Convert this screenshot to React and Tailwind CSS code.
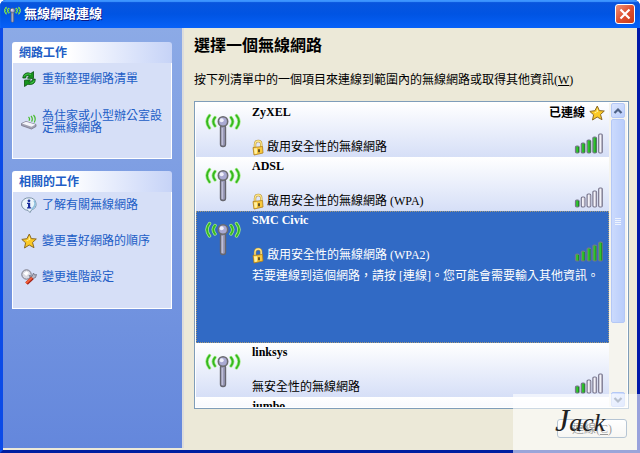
import React from "react";

const networks = [
  { name: "ZyXEL", security: "啟用安全性的無線網路", locked: true, bars: 4, connected: true },
  { name: "ADSL", security: "啟用安全性的無線網路 (WPA)", locked: true, bars: 1 },
  {
    name: "SMC Civic",
    security: "啟用安全性的無線網路 (WPA2)",
    locked: true,
    bars: 5,
    selected: true,
    hint: "若要連線到這個網路，請按 [連線]。您可能會需要輸入其他資訊。",
  },
  { name: "linksys", security: "無安全性的無線網路", bars: 2 },
  { name: "jumbo" },
];

function Antenna({ className }) {
  return (
    <svg viewBox="0 0 36 36" className={className} aria-hidden="true">
      <g fill="none" strokeLinecap="round">
        <g stroke="#a6ec8c" strokeWidth="3.4">
          <path d="M4.5 3.5Q-.5 9.5 4.5 16M10 5.500Q6.500 9.500 10 14M31.500 3.500Q36.500 9.500 31.500 16M26 5.500Q29.500 9.500 26 14" />
        </g>
        <g stroke="#35b81f" strokeWidth="1.900">
          <path d="M4.500 3.500Q-.5 9.500 4.500 16M10 5.500Q6.500 9.500 10 14M31.500 3.500Q36.500 9.500 31.500 16M26 5.500Q29.500 9.500 26 14" />
        </g>
      </g>
      <rect x="15.500" y="13" width="5" height="21.500" rx="2.200" fill="#9a9ab8" stroke="#66666e" strokeWidth="1.400" />
      <path d="M17.200 16v17" stroke="#d0d0e4" strokeWidth="1" />
      <circle cx="18" cy="9.500" r="4.700" fill="#a9a9d2" stroke="#6c6c70" strokeWidth="1.600" />
      <circle cx="16.700" cy="8.200" r="2" fill="#efeffa" />
    </svg>
  );
}

function Star({ className }) {
  return (
    <svg viewBox="0 0 16 16" className={className} aria-hidden="true">
      <path d="M8.300 1 10.300 5.600 15.300 6 11.500 9.500 13 14.700 8.200 12 3.500 15 4.600 9.800.8 6.400 5.900 5.700Z" fill="#fbc926" stroke="#8b6a24" strokeWidth="1" strokeLinejoin="round" />
      <path d="M8.200 3 9.300 6.700 5 7.100 7 8.300 6 11Q7.500 8 8.200 3Z" fill="#fff29a" />
    </svg>
  );
}

function Lock({ className }) {
  return (
    <svg viewBox="0 0 12 17" className={className} aria-hidden="true">
      <path d="M3 9V5.500Q3 2 6.200 2T9.200 5.500V8" fill="none" stroke="#b5913a" strokeWidth="2.400" />
      <path d="M3 9V5.500Q3 2 6.200 2T9.200 5.500V8" fill="none" stroke="#ffe98a" strokeWidth="1.300" />
      <path d="M1 8.500 10.500 7.500 11 14 2 16Z" fill="#f9c83c" stroke="#b07d16" strokeWidth=".8" strokeLinejoin="round" />
      <path d="M2 9.500 5 9.200 5 14.500 2.700 15Z" fill="#fff0a0" />
      <path d="M7 10.300v3" stroke="#44361a" strokeWidth="1.600" />
    </svg>
  );
}

function Signal({ level }) {
  const heights = [7, 10, 13, 16, 19];
  return (
    <svg viewBox="0 0 30 22" className="h-[22px] w-[30px]" role="img" aria-label={`訊號強度 ${level}`}>
      {heights.map((h, i) => (
        <g key={h}>
          <rect x={1.5 + i * 5.8} y={21 - h} width="3.600" height={h} rx="1.200" fill={i < level ? "#2fc42c" : "#f3f2f8"} stroke="#77748c" strokeWidth="1.200" />
          <path d={`M${4.5 + i * 5.800} ${22 - h}V20.500`} stroke={i < level ? "#13851b" : "#a9a6b6"} strokeWidth=".8" />
        </g>
      ))}
    </svg>
  );
}

function RefreshIcon() {
  return (
    <svg viewBox="0 0 16 16" className="size-4" aria-hidden="true">
      <g fill="#17941f" stroke="#07500d" strokeWidth=".8" strokeLinejoin="round">
        <path d="M1.800 7Q2.200 2 7 1.800L9.800 2.500 12.500.6V7.500L6.500 7.200 8.300 5Q5.200 3.600 4.600 7Z" />
        <path d="M14.200 8Q14.500 13 9.500 13.500L6.800 13.300 3.500 15.500V9.200L9.500 8.800 7.800 10.900Q10.800 11.600 11.400 8.600Z" />
      </g>
      <path d="M3 5.500Q4 2.800 7.500 2.900L10 3.500M13.200 9.500Q12.800 12 9.500 12.300" fill="none" stroke="#4fd04f" strokeWidth=".9" />
    </svg>
  );
}

function RouterIcon() {
  return (
    <svg viewBox="0 0 16 16" className="size-4" aria-hidden="true">
      <path d="M.5 9.500 5 7.500 15 10.500V12.500L10.500 15 .5 11.500Z" fill="#a2a2b4" stroke="#77778a" strokeWidth=".8" />
      <path d="M1 9.500 5 7.800 14.500 10.600 10.500 12.800Z" fill="#f4f4fa" />
      <path d="M7.500 3Q9.300 4.500 8 6.800M10 2Q12.300 4.500 10.600 7.600M12.500 1Q15.500 4.500 13.200 8.500" fill="none" stroke="#45bb2c" strokeWidth="1.200" />
    </svg>
  );
}

function InfoIcon() {
  return (
    <svg viewBox="0 0 16 16" className="size-4" aria-hidden="true">
      <path d="M8 .8A7 6.300 0 0 1 10.500 13L9 15.600 7 13.400A7 6.300 0 0 1 8 .8Z" fill="#eaf4fb" stroke="#7d93a8" />
      <path d="M13 3.500Q16 8.500 10.500 12.500" fill="none" stroke="#8fc0de" strokeWidth="1.500" />
      <circle cx="8" cy="3.800" r="1.400" fill="#1c2f9c" />
      <path d="M6 5.800H9.200V10.200H10.200V11.400H6V10.200H7V7H6Z" fill="#1c2f9c" />
    </svg>
  );
}

function ToolsIcon() {
  return (
    <svg viewBox="0 0 16 16" className="size-4" aria-hidden="true">
      <circle cx="5.500" cy="5.500" r="4.700" fill="#d9d9e2" stroke="#777785" />
      <path d="M2.500 4.500 5.500 2.200 8 4 5.200 7Z" fill="#fff" />
      <path d="M8 6.500 11 7.500 12.500 4 13.500 6 15.500 5.500 14.500 8.500 11 10Z" fill="#b9b9c6" stroke="#6c6c7c" strokeWidth=".8" />
      <path d="M11.500 9 5.500 14.500" stroke="#a32016" strokeWidth="3.600" />
      <path d="M11 8.800 5 14.200" stroke="#f2613c" strokeWidth="1.900" />
    </svg>
  );
}

function Panel({ title, height, children }) {
  return (
    <section>
      <h2 className="flex h-[21px] items-center rounded-t-[3px] bg-linear-to-r from-white from-35% to-[#c6d3f7] pl-[7px] text-[12px] font-bold leading-4 text-[#215dc6]">
        {title}
      </h2>
      <div className={`border border-t-0 border-white bg-[#d6dff7] px-2 ${height}`}>{children}</div>
    </section>
  );
}

function Task({ icon, children }) {
  return (
    <li>
      <a href="#" className="flex items-center gap-[5px] text-[12px] leading-3 text-[#215dc6]">
        <span className="size-4 shrink-0">{icon}</span>
        <span>{children}</span>
      </a>
    </li>
  );
}

function NetworkRow({ network }) {
  const { name, security, locked, bars, connected, selected, hint } = network;
  return (
    <li
      className={
        selected
          ? "flex h-[132px] shrink-0 border border-dotted border-[#a59a78] bg-[#316ac5] text-white"
          : "flex h-[54px] shrink-0 border border-transparent bg-linear-to-b from-white to-[#d6dff7] bg-origin-border text-black"
      }
    >
      <Antenna className="ml-2 mt-2 size-9 shrink-0" />
      <div className="ml-[11px] min-w-0 flex-1 whitespace-nowrap text-[12px] leading-4">
        <div className="flex h-[34px] items-start justify-between">
          <h3 className="font-bold">{name}</h3>
          {connected && (
            <span className="flex items-center gap-1 pr-[3px] pt-px font-bold">
              已連線
              <Star className="size-4" />
            </span>
          )}
        </div>
        {security && (
          <div className="flex h-[18px] items-center">
            {locked && <Lock className="mr-[3px] h-[17px] w-3" />}
            <span className="flex-1">{security}</span>
            <span className="-mt-2 pr-1">
              <Signal level={bars} />
            </span>
          </div>
        )}
        {hint && <p className="pt-1">{hint}</p>}
      </div>
    </li>
  );
}

function ScrollButton({ label, path }) {
  return (
    <button aria-label={label} className="flex h-[15px] w-full shrink-0 items-center justify-center rounded-[2px] border border-[#b4c8f6] bg-linear-to-br from-[#dce6fe] to-[#b9cdfb]">
      <svg viewBox="0 0 10 8" className="h-2 w-[10px]" aria-hidden="true">
        <path d={path} fill="none" stroke="#4d6185" strokeWidth="2.200" />
      </svg>
    </button>
  );
}

export default function App() {
  return (
    <div className={`relative flex h-screen flex-col overflow-hidden rounded-t-[6px] bg-[#0a3fd8] font-["Liberation_Serif","Noto_Sans_CJK_TC",serif]`}>
      <header className="flex h-7 shrink-0 items-center bg-linear-to-b from-[#0a55dc] via-[#0054e3] to-[#0761f8] pl-1 pr-[5px] shadow-[inset_0_2px_1px_#3d95ff]">
        <Antenna className="mr-[3px] size-[17px]" />
        <h1 className="flex-1 text-[13px] font-bold leading-4 text-white [text-shadow:1px_1px_#0a1883]">無線網路連線</h1>
        <button aria-label="關閉" className="flex size-5 items-center justify-center rounded-[3px] border border-white bg-linear-to-br from-[#ee9277] via-[#df5030] to-[#c83a16]">
          <svg viewBox="0 0 12 12" className="size-3" aria-hidden="true">
            <path d="M1.500 1.500 10.500 10.500M10.500 1.500 1.500 10.500" stroke="#fff" strokeWidth="2.200" />
          </svg>
        </button>
      </header>

      <div className="flex min-h-0 flex-1 border-x-[3px] border-b-[3px] border-b-[#001ea0] border-l-[#0b4be8] border-r-[#0018a8] bg-[#ece9d8]">
        <aside className="mb-[2px] flex w-[181px] shrink-0 flex-col gap-3 border-r-2 border-r-[#dcdcdc] bg-linear-to-b from-[#8caae6] to-[#6487dc] pl-[9px] pr-[10px] pt-[14px]">
          <Panel title="網路工作" height="h-[96px]">
            <ul className="flex flex-col gap-[23px] pt-2">
              <Task icon={<RefreshIcon />}>重新整理網路清單</Task>
              <Task icon={<RouterIcon />}>為住家或小型辦公室設定無線網路</Task>
            </ul>
          </Panel>
          <Panel title="相關的工作" height="h-[117px]">
            <ul className="flex flex-col gap-5 pt-[5px]">
              <Task icon={<InfoIcon />}>了解有關無線網路</Task>
              <Task icon={<Star className="size-4" />}>變更喜好網路的順序</Task>
              <Task icon={<ToolsIcon />}>變更進階設定</Task>
            </ul>
          </Panel>
        </aside>

        <main className="flex min-w-0 flex-1 flex-col pb-3 pl-[10px] pr-2 pt-2 text-black">
          <h2 className="text-[16px] font-bold leading-5">選擇一個無線網路</h2>
          <p className="mt-4 whitespace-nowrap text-[12px] leading-4">
            按下列清單中的一個項目來連線到範圍內的無線網路或取得其他資訊(<u>W</u>)
          </p>
          <div className="mt-[13px] flex min-h-0 flex-1 border border-[#7f9db9] bg-white p-px">
            <ul className="flex min-w-0 flex-1 flex-col overflow-hidden">
              {networks.map((n) => (
                <NetworkRow key={n.name} network={n} />
              ))}
            </ul>
            <div className="flex w-[18px] shrink-0 flex-col bg-[#f5f4ee] px-[2px]">
              <ScrollButton label="向上捲動" path="M1.500 6 5 2.500 8.500 6" />
              <div className="my-px flex h-[204px] w-full items-center justify-center rounded-[2px] border border-[#b4c8f6] bg-linear-to-r from-[#cbdafd] to-[#b9cdfb]">
                <div className="flex w-[6px] flex-col gap-px">
                  <i className="h-px bg-[#eef4fe]" />
                  <i className="h-px bg-[#eef4fe]" />
                  <i className="h-px bg-[#eef4fe]" />
                  <i className="h-px bg-[#eef4fe]" />
                </div>
              </div>
              <div className="flex-1" />
              <ScrollButton label="向下捲動" path="M1.500 2 5 5.500 8.500 2" />
            </div>
          </div>
          <div className="mt-[10px] flex shrink-0 justify-end pr-[2px]">
            <button className="h-[19px] w-[70px] rounded-[3px] border border-[#4a6f93] bg-linear-to-b from-white to-[#eceae2] text-[12px] leading-4">
              連線(<u>C</u>)
            </button>
          </div>
        </main>
      </div>

      <div className="pointer-events-none absolute bottom-0 right-0 flex h-[59px] w-[127px] items-center bg-white/60 pb-1 pl-[42px]">
        <span className={`font-["Liberation_Serif",serif] text-[26px] italic leading-8 text-[#222] first-letter:text-[32px]`}>Jack</span>
      </div>
    </div>
  );
}
